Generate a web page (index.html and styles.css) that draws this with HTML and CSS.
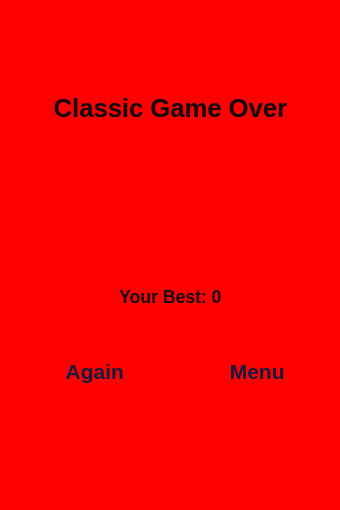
FILE: index.html
```html
<!DOCTYPE html>
<html>
<head>
<meta charset="utf-8">
<link rel="stylesheet" href="styles.css">
</head>
<body>
<div class="screen">
  <h1 class="title">Classic Game Over</h1>
  <p class="best">Your Best: 0</p>
  <div class="actions">
    <span class="action">Again</span>
    <span class="action">Menu</span>
  </div>
</div>
</body>
</html>
```
FILE: styles.css
```css
html, body {
  margin: 0;
  padding: 0;
  background: #ff0000;
}
.screen {
  width: 340px;
  height: 510px;
  display: flex;
  flex-direction: column;
  font-family: "Liberation Sans", Arial, sans-serif;
  font-weight: bold;
}
.title {
  margin: 92px 0 0;
  font-size: 25.6px;
  line-height: 32px;
  text-align: center;
  color: #140808;
}
.best {
  margin: 161px 0 0;
  font-size: 17.6px;
  line-height: 24px;
  text-align: center;
  color: #1a0a0a;
}
.actions {
  margin-top: 50px;
  display: flex;
  justify-content: space-between;
  padding: 0 56px 0 65px;
}
.action {
  font-size: 21px;
  line-height: 26px;
  color: #1c1a3a;
}
```
